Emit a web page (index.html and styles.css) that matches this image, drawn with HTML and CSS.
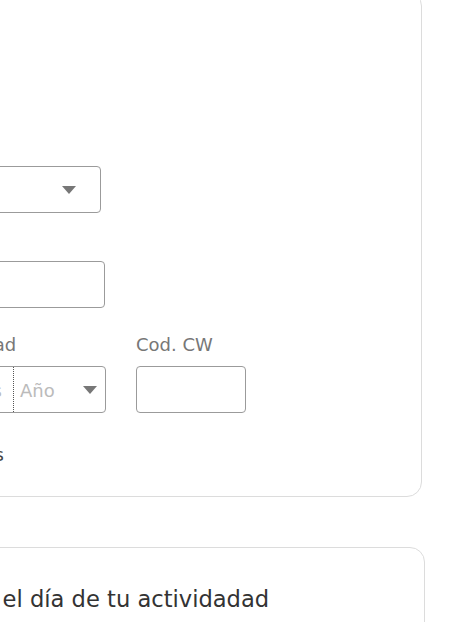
FILE: index.html
```html
<!DOCTYPE html>
<html lang="es">
<head>
<meta charset="utf-8">
<title>Pago</title>
<link rel="stylesheet" href="styles.css">
</head>
<body>
<main class="page">
  <section class="card card-pay">
    <div class="field field-type">
      <div class="select select-type"><span class="arrow"></span></div>
    </div>
    <div class="field field-holder">
      <div class="input input-holder"></div>
    </div>
    <div class="row">
      <div class="field field-exp">
        <label class="label">Fecha de caducidad</label>
        <div class="split">
          <div class="split-part part-month"><span class="placeholder">Mes</span></div>
          <div class="split-part part-year"><span class="placeholder">Año</span><span class="arrow"></span></div>
        </div>
      </div>
      <div class="field field-cw">
        <label class="label">Cod. CW</label>
        <div class="input input-cw"></div>
      </div>
    </div>
    <label class="check"><span class="check-box"></span><span class="check-text">Guardar datos</span></label>
  </section>
  <section class="card card-info">
    <p class="info"><span class="info-icon"></span><span class="info-text">Recuérdalo el día de tu actividadad</span></p>
  </section>
</main>
</body>
</html>
```
FILE: styles.css
```css
* { box-sizing: border-box; }
html, body { margin: 0; padding: 0; background: #fff; }
body {
  font-family: "DejaVu Sans", "Noto Sans", sans-serif;
  color: #444;
  width: 471px;
  height: 622px;
  overflow: hidden;
}
.page {
  margin-left: -187px;
  margin-top: -9px;
  width: 612px;
}
.card {
  border: 1px solid #dcdcdc;
  border-radius: 15px;
  background: #fff;
}
.card-pay {
  width: 609px;
  padding: 174px 23px 30px 23px;
}
.field-type { margin-bottom: 48px; }
.field-holder { margin-bottom: 26px; }
.label {
  display: block;
  font-size: 18px;
  line-height: 22px;
  color: #777;
  margin-bottom: 10px;
  white-space: nowrap;
}
.select, .input, .split {
  height: 47px;
  border: 1px solid #9b9b9b;
  border-radius: 4px;
  background: #fff;
}
.select {
  display: flex;
  align-items: center;
  justify-content: flex-end;
  padding-right: 24px;
}
.select-type { width: 264px; }
.input-holder { width: 268px; }
.arrow {
  width: 0;
  height: 0;
  border-left: 7.5px solid transparent;
  border-right: 7.5px solid transparent;
  border-top: 8px solid #777;
}
.row {
  display: flex;
  gap: 30px;
}
.field-exp { width: 269px; }
.field-cw { width: 110px; }
.input-cw { width: 110px; }
.split {
  display: flex;
}
.split-part {
  display: flex;
  align-items: center;
  font-size: 18px;
}
.part-month {
  flex: 1;
  justify-content: flex-end;
  padding-right: 11px;
}
.part-year {
  width: 92px;
  border-left: 1px dotted #555;
  padding-left: 6px;
  padding-right: 8px;
}
.part-year .arrow { margin-left: auto; }
.placeholder { color: #bbb; line-height: 22px; padding-top: 2px; }
.check {
  display: flex;
  align-items: center;
  gap: 18px;
  margin-top: 31px;
  font-size: 18px;
  line-height: 22px;
  color: #444;
}
.check-box {
  width: 20px;
  height: 20px;
  border: 1px solid #9b9b9b;
  border-radius: 3px;
}
.card-info {
  margin-top: 50px;
  width: 612px;
  height: 160px;
  padding: 36px 23px 0 23px;
}
.info {
  margin: 0;
  display: flex;
  align-items: center;
  gap: 8px;
  font-size: 22.6px;
  line-height: 30px;
  color: #333;
  white-space: nowrap;
}
.info-icon {
  width: 24px;
  height: 24px;
  border-radius: 50%;
  border: 2px solid #555;
}
```
